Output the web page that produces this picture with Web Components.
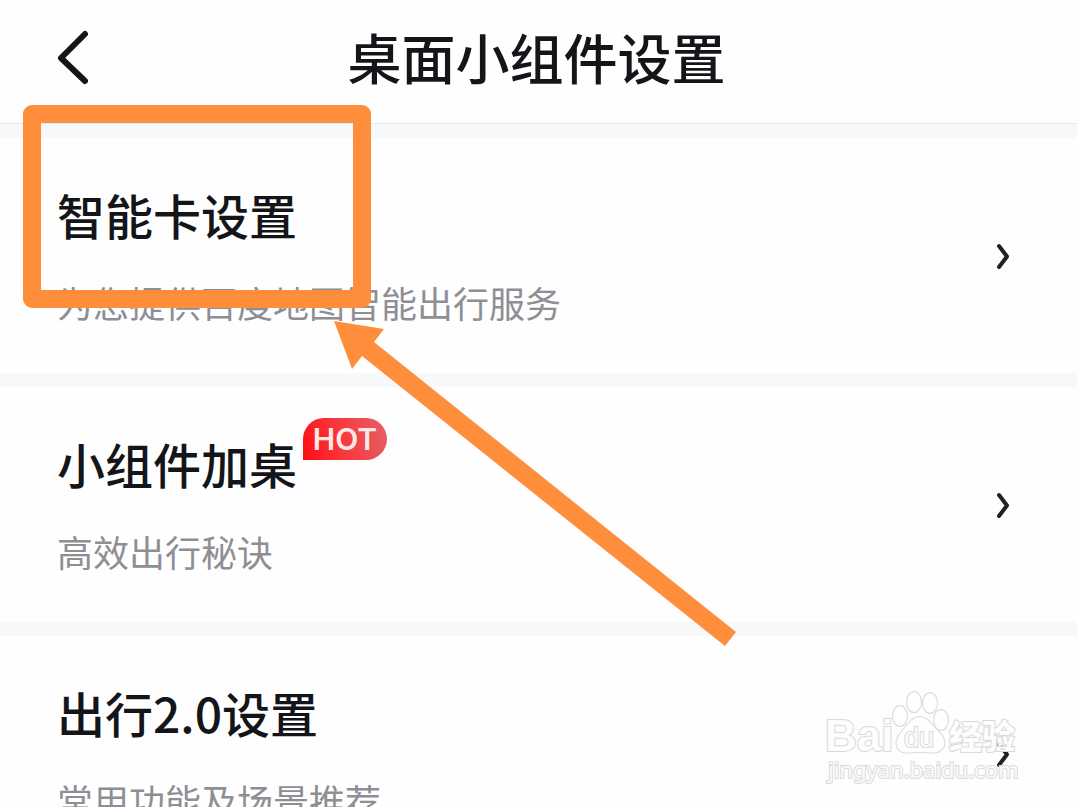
<!DOCTYPE html>
<html lang="zh-CN">
<head>
<meta charset="utf-8">
<meta name="viewport" content="width=device-width, initial-scale=1">
<title>桌面小组件设置</title>
<style>
  html, body { margin: 0; height: 100%; }
  body {
    overflow: hidden;
    background: #fefefe;
    color: #141519;
    font-family: "Noto Sans CJK SC", sans-serif;
  }
</style>
</head>
<body>
<settings-page>
  <page-header slot="header">桌面小组件设置</page-header>
  <setting-row href="#smart-card">智能卡设置<span slot="note">为您提供百度地图智能出行服务</span></setting-row>
  <setting-row href="#add-widget">小组件加桌<hot-badge slot="badge">HOT</hot-badge><span slot="note">高效出行秘诀</span></setting-row>
  <setting-row href="#travel">出行2.0设置<span slot="note">常用功能及场景推荐</span></setting-row>
  <guide-marks slot="overlay"></guide-marks>
  <site-watermark slot="overlay"></site-watermark>
</settings-page>

<script>
class BaseElement extends HTMLElement {
  connectedCallback() {
    if (!this.shadowRoot) {
      this.attachShadow({ mode: 'open' }).innerHTML = this.template();
    }
  }
}

class SettingsPage extends BaseElement {
  template() {
    return `
      <style>
        :host { display: block; position: relative; height: 100%; overflow: hidden; }
        main { display: flex; flex-direction: column; gap: 14px; padding-top: 14px; background: #f7f8f9; }
      </style>
      <slot name="header"></slot>
      <main><slot></slot></main>
      <slot name="overlay"></slot>`;
  }
}

class PageHeader extends BaseElement {
  template() {
    return `
      <style>
        :host { display: block; background: #fefefe; border-bottom: 1px solid #e6e8ea; }
        header {
          display: grid; grid-template-columns: 96px 1fr 100px; align-items: center;
          height: 123px; box-sizing: border-box; padding-bottom: 10px;
        }
        button { border: 0; padding: 0 0 0 56px; background: none; color: inherit; cursor: pointer; }
        svg { display: block; }
        h1 { margin: 0; font-size: 54px; line-height: 72px; font-weight: 500; text-align: center; }
      </style>
      <header>
        <button type="button" aria-label="返回">
          <svg width="34" height="56" viewBox="0 0 34 56" fill="none" stroke="currentColor" stroke-width="6" stroke-linecap="round" stroke-linejoin="round"><path d="M29 5 5 29l24 23"/></svg>
        </button>
        <h1><slot></slot></h1>
      </header>`;
  }
}

class SettingRow extends BaseElement {
  template() {
    return `
      <style>
        :host { display: block; background: #fefefe; }
        a {
          display: flex; align-items: center; justify-content: space-between;
          box-sizing: border-box; min-height: 235px; padding: 0 67px 0 57px;
          color: inherit; text-decoration: none;
        }
        .text { display: flex; flex-direction: column; align-items: flex-start; gap: 34px; padding-bottom: 2px; }
        h2 { position: relative; margin: 0; font-size: 48px; line-height: 60px; font-weight: 500; white-space: nowrap; }
        p { margin: 0; color: #8e8f94; font-size: 36px; line-height: 48px; }
        svg { flex: none; display: block; }
      </style>
      <a href="${this.getAttribute('href')}">
        <div class="text">
          <h2><slot></slot><slot name="badge"></slot></h2>
          <p><slot name="note"></slot></p>
        </div>
        <svg width="14" height="28" viewBox="0 0 14 28" fill="none" stroke="#202124" stroke-width="4" stroke-linecap="round" stroke-linejoin="round" aria-hidden="true"><path d="M3 4l8 10.500-8 10.500"/></svg>
      </a>`;
  }
}

class HotBadge extends BaseElement {
  template() {
    return `
      <style>
        :host {
          position: absolute; left: 100%; top: -15px; margin-left: 6px;
          width: 84px; height: 42px; border-radius: 21px 21px 21px 0;
          background: linear-gradient(75deg, #ff0d14 0%, #f8383d 45%, #e46066 100%);
          color: #ffe9e4; font: 600 30px/42px Inter, sans-serif; text-align: center;
        }
      </style>
      <slot></slot>`;
  }
}

class GuideMarks extends BaseElement {
  template() {
    return `
      <style>
        :host { position: absolute; left: 0; top: 0; pointer-events: none; }
        svg { display: block; }
      </style>
      <svg width="760" height="660" viewBox="0 0 760 660" aria-hidden="true">
        <rect x="32" y="114" width="330" height="185" fill="none" stroke="#ff8e3c" stroke-width="18" stroke-linejoin="round"/>
        <path d="M334 321 384 329 374 342 736 632 725 646 362 356 352 369Z" fill="#ff8e3c"/>
      </svg>`;
  }
}

class SiteWatermark extends BaseElement {
  template() {
    return `
      <style>
        :host { position: absolute; right: 52px; top: 686px; pointer-events: none; }
        svg { display: block; }
        .shape { fill: #fff; fill-opacity: .9; stroke: #dadada; stroke-width: 2; paint-order: stroke; }
        .latin { font: 700 44px "Liberation Sans", sans-serif; }
        .cjk { font: 900 33px "Noto Sans CJK SC", sans-serif; }
        .du { font: 400 27px "Liberation Sans", sans-serif; }
        .url { font: 400 22px "Noto Sans", sans-serif; }
      </style>
      <svg width="201" height="106" viewBox="0 0 201 106">
        <text class="shape latin" x="1" y="65">Bai</text>
        <g class="shape">
          <ellipse cx="76" cy="30" rx="7" ry="10"/>
          <ellipse cx="90" cy="16" rx="7" ry="10"/>
          <ellipse cx="106" cy="17" rx="7" ry="10"/>
          <ellipse cx="117" cy="34" rx="7" ry="10"/>
          <path d="M96 31C88 31 84 38 80 43 75 49 71 53 73 60 75 69 85 66 96 66 107 66 116 69 120 60 122 52 116 47 112 43 107 38 104 31 96 31Z"/>
        </g>
        <text class="shape du" x="80" y="61">du</text>
        <text class="shape cjk" x="125" y="63">经验</text>
        <text class="shape url" x="4" y="92">jingyan.baidu.com</text>
      </svg>`;
  }
}

customElements.define('settings-page', SettingsPage);
customElements.define('page-header', PageHeader);
customElements.define('setting-row', SettingRow);
customElements.define('hot-badge', HotBadge);
customElements.define('guide-marks', GuideMarks);
customElements.define('site-watermark', SiteWatermark);
</script>
</body>
</html>
